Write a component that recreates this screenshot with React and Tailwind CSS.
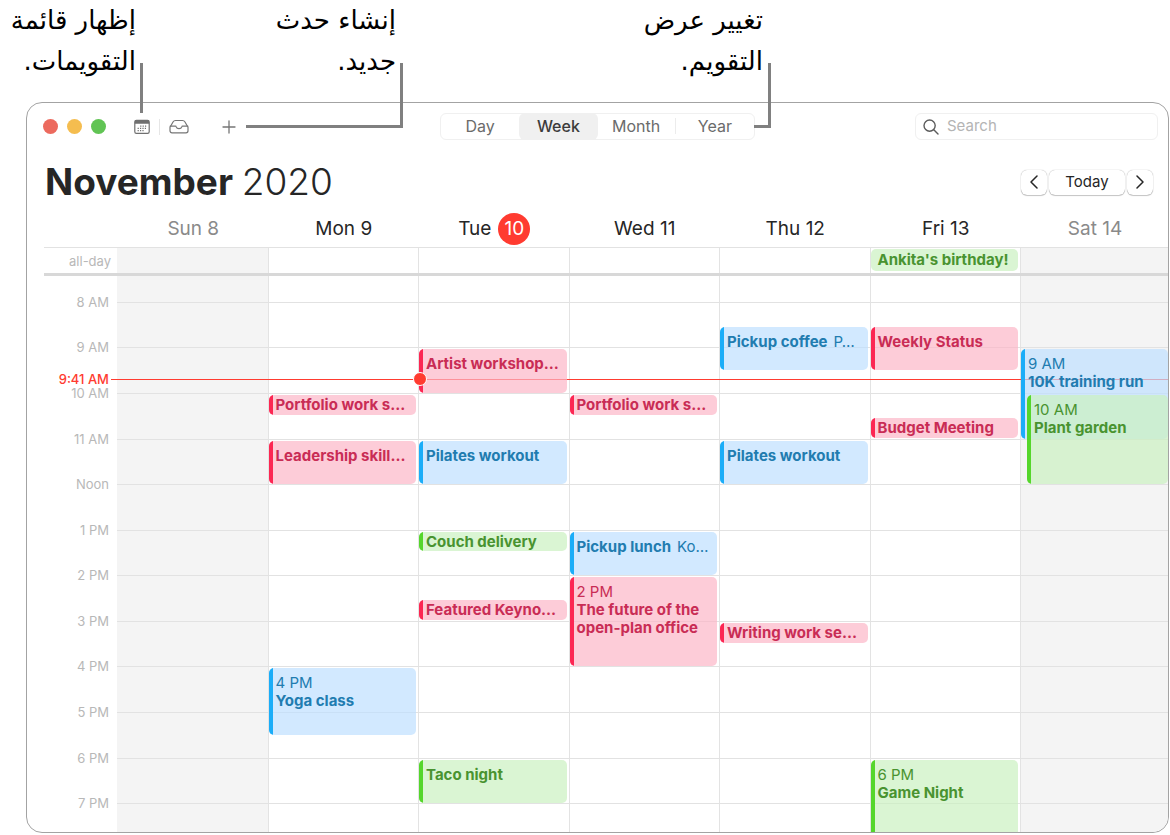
import React, { useState } from 'react';

// The visible part of the day, in minutes after midnight (7:26 AM - 7:38 PM)
const DAY_START = 446;
const DAY_END = 1178;
const NOW = 581;

const views = ['Day', 'Week', 'Month', 'Year'];

const days = [
  { name: 'Sun', date: 8, weekend: true },
  { name: 'Mon', date: 9 },
  { name: 'Tue', date: 10, today: true },
  { name: 'Wed', date: 11 },
  { name: 'Thu', date: 12 },
  { name: 'Fri', date: 13 },
  { name: 'Sat', date: 14, weekend: true },
];

const hours = [
  { hour: 8, label: '8 AM' },
  { hour: 9, label: '9 AM' },
  { hour: 10, label: '10 AM' },
  { hour: 11, label: '11 AM' },
  { hour: 12, label: 'Noon' },
  { hour: 13, label: '1 PM' },
  { hour: 14, label: '2 PM' },
  { hour: 15, label: '3 PM' },
  { hour: 16, label: '4 PM' },
  { hour: 17, label: '5 PM' },
  { hour: 18, label: '6 PM' },
  { hour: 19, label: '7 PM' },
];

const events = [
  { day: 1, start: 10, end: 10.5, title: 'Portfolio work s…', color: 'pink' },
  { day: 1, start: 11, end: 12, title: 'Leadership skill…', color: 'pink' },
  { day: 1, start: 16, end: 17.5, time: '4 PM', title: 'Yoga class', color: 'blue' },
  { day: 2, start: 9, end: 10, title: 'Artist workshop…', color: 'pink' },
  { day: 2, start: 11, end: 12, title: 'Pilates workout', color: 'blue' },
  { day: 2, start: 13, end: 13.5, title: 'Couch delivery', color: 'green' },
  { day: 2, start: 14.5, end: 15, title: 'Featured Keyno…', color: 'pink' },
  { day: 2, start: 18, end: 19, title: 'Taco night', color: 'green' },
  { day: 3, start: 10, end: 10.5, title: 'Portfolio work s…', color: 'pink' },
  { day: 3, start: 13, end: 14, title: 'Pickup lunch', place: 'Ko…', color: 'blue' },
  { day: 3, start: 14, end: 16, time: '2 PM', title: 'The future of the open-plan office', color: 'pink' },
  { day: 4, start: 8.5, end: 9.5, title: 'Pickup coffee', place: 'P…', color: 'blue' },
  { day: 4, start: 11, end: 12, title: 'Pilates workout', color: 'blue' },
  { day: 4, start: 15, end: 15.5, title: 'Writing work se…', color: 'pink' },
  { day: 5, start: 8.5, end: 9.5, title: 'Weekly Status', color: 'pink' },
  { day: 5, start: 10.5, end: 11, title: 'Budget Meeting', color: 'pink' },
  { day: 5, start: 18, end: 20, time: '6 PM', title: 'Game Night', color: 'green' },
  { day: 6, start: 9, end: 11, time: '9 AM', title: '10K training run', color: 'blue' },
  { day: 6, start: 10, end: 12, time: '10 AM', title: 'Plant garden', color: 'green', indent: true },
];

const colors = {
  pink: 'bg-[rgb(252_182_199/0.7)] text-[#c92c55]',
  blue: 'bg-[rgb(191_224_255/0.7)] text-[#217cb0]',
  green: 'bg-[rgb(202_241_192/0.7)] text-[#499330]',
};

const bars = {
  pink: 'bg-[#fc2753]',
  blue: 'bg-[#1badf8]',
  green: 'bg-[#55d62c]',
};

const columns = 'grid grid-cols-[73px_repeat(6,minmax(0,1fr))_148px]';

// Grid line for a minute of the day, kept inside the visible part
const row = (minute) => Math.min(Math.max(minute, DAY_START), DAY_END) - DAY_START + 1;

function CalendarIcon() {
  return (
    <svg width="16" height="16" viewBox="0 0 16 16" fill="none">
      <rect x="0.8" y="1.3" width="14.4" height="13" rx="1.6" stroke="#6f6f6f" strokeWidth="1.2" />
      <path d="M0.8 4.8V2.600a1.600 1.600 0 0 1 1.600-1.600h11.200a1.600 1.600 0 0 1 1.600 1.600v2.200z" fill="#6f6f6f" />
      <path d="M6.200 7.200h7M3.600 9.400h9.600M3.600 11.600h7" stroke="#6f6f6f" strokeWidth="1.200" strokeDasharray="1.200 1.200" />
    </svg>
  );
}

function InboxIcon() {
  return (
    <svg width="20" height="16" viewBox="0 0 20 16" fill="none" stroke="#767676" strokeWidth="1.2" strokeLinejoin="round" strokeLinecap="round">
      <path d="M1 8.200 4 3Q4.900 1.500 6.500 1.500h7Q15.100 1.500 16 3l3 5.200v3.600a2 2 0 0 1-2 2H3a2 2 0 0 1-2-2z" />
      <path d="M1.200 7.200h5.300q.6 0 .7.700a2.900 2.400 0 0 0 5.600 0q.1-.7.700-.7h5.300" />
    </svg>
  );
}

function Event({ event }) {
  const short = event.end - event.start < 1;
  const last = event.day === 6;
  const cut = event.end * 60 > DAY_END;
  return (
    <article
      className={`mt-[2px] flex overflow-hidden text-[15px] leading-[18px] ${cut ? 'rounded-t-[5px]' : 'rounded-[5px]'} ${last ? '' : 'mr-[2px]'} ${event.indent ? 'ml-[7px]' : 'ml-px'} ${short ? 'mb-px' : ''} ${colors[event.color]}`}
      style={{
        gridColumn: event.day + 2,
        gridRow: `${row(event.start * 60)} / ${row(event.end * 60)}`,
      }}
    >
      <div className={`w-1 shrink-0 ${bars[event.color]}`} />
      <div className={`min-w-0 flex-1 pl-[3px] ${short ? 'pt-px' : 'pt-[6px]'} ${event.time ? '' : 'whitespace-nowrap'}`}>
        {event.time && <p>{event.time}</p>}
        <h3 className="inline font-bold">{event.title}</h3>
        {event.place && <span className="ml-[6px]">{event.place}</span>}
      </div>
    </article>
  );
}

export default function App() {
  const [view, setView] = useState('Week');

  return (
    <div className="bg-white pl-[26px] pr-px pb-[2px] font-['Inter','Liberation_Sans',sans-serif] text-[#262626]">
      {/* Callouts */}
      <header
        className="grid grid-cols-[minmax(0,1fr)_315px_minmax(0,1fr)] whitespace-nowrap pb-5 font-['DejaVu_Sans',sans-serif] text-[26px] leading-[41px] text-black"
        lang="ar"
      >
        <div className="flex">
          <p className="w-[110px]" dir="rtl">إظهار قائمة<br />التقويمات.</p>
          <p className="w-[260px]" dir="rtl">إنشاء حدث<br />جديد.</p>
        </div>
        <p className="-mr-2" dir="rtl">تغيير عرض<br />التقويم.</p>
      </header>

      <main className="rounded-2xl border border-[#a3a3a3]">
        {/* Toolbar */}
        <div className="grid grid-cols-[minmax(0,1fr)_315px_minmax(0,1fr)] items-center pt-[10px]">
          <div className="flex items-center pl-4">
            <div className="flex gap-[9px]">
              <button aria-label="Close" className="size-[15px] rounded-full bg-[#ec6a5e]" />
              <button aria-label="Minimize" className="size-[15px] rounded-full bg-[#f5bd4f]" />
              <button aria-label="Zoom" className="size-[15px] rounded-full bg-[#61c454]" />
            </div>
            <button aria-label="Calendars" className="relative ml-7">
              <CalendarIcon />
              <span className="absolute bottom-[22px] left-[6px] h-[50px] w-[3px] bg-[#808080]" />
            </button>
            <div className="ml-[9px] h-4 w-px bg-[#e6e6e6]" />
            <button aria-label="Inbox" className="ml-[9px]">
              <InboxIcon />
            </button>
            <button aria-label="New event" className="relative ml-[33px]">
              <svg width="14" height="14" viewBox="0 0 14 14" stroke="#767676" strokeWidth="1.3" strokeLinecap="round">
                <path d="M7 1v12M1 7h12" />
              </svg>
              <span className="absolute bottom-[6px] left-6 h-[65px] w-[157px] border-b-3 border-r-3 border-[#808080]" />
            </button>
          </div>

          <div className="relative flex h-[27px] rounded-md border border-[#f0f0f0] text-[16px] text-[#6b6b6b]">
            {views.map((v) => (
              <button
                key={v}
                onClick={() => setView(v)}
                className={`my-[-1px] flex-1 pb-[2px] ${v === view ? 'rounded-md bg-[#f0f0f0] font-medium text-[#3c3c3c]' : ''}`}
              >
                <span className={`block leading-4 ${v === 'Month' ? 'border-r border-[#ececec]' : ''}`}>{v}</span>
              </button>
            ))}
            <span className="absolute bottom-[11px] left-full h-[65px] w-[17px] border-b-3 border-r-3 border-[#808080]" />
          </div>

          <label className="mr-[10px] flex h-[27px] w-[243px] items-center justify-self-end rounded-md border border-[#f0f0f0] pl-[7px]">
            <svg width="16" height="16" viewBox="0 0 16 16" fill="none" stroke="#5c5c5c" strokeWidth="1.4" strokeLinecap="round">
              <circle cx="6.6" cy="6.600" r="5.600" />
              <path d="M10.800 10.800 15 15" />
            </svg>
            <input
              type="text"
              aria-label="Search"
              placeholder="Search"
              className="ml-2 min-w-0 flex-1 text-[15px] outline-none placeholder:text-[#b4b4b4]"
            />
          </label>
        </div>

        {/* Month title */}
        <div className="flex items-center justify-between pb-[6px] pl-[18px] pr-[15px] pt-[17px]">
          <h1 className="text-[37px] font-bold leading-[50px]">
            November <span className="font-light">2020</span>
          </h1>
          <div className="flex gap-[2px] text-[15px]">
            <button aria-label="Previous week" className="flex h-[25px] w-[26px] items-center justify-center rounded-md shadow-[0_0_1px_#0006,0_1px_1px_#0003]">
              <svg width="8" height="14" viewBox="0 0 8 14" fill="none" stroke="#262626" strokeWidth="1.500" strokeLinecap="round" strokeLinejoin="round">
                <path d="M7 1 1 7l6 6" />
              </svg>
            </button>
            <button className="h-[25px] w-[76px] rounded-md shadow-[0_0_1px_#0006,0_1px_1px_#0003]">Today</button>
            <button aria-label="Next week" className="flex h-[25px] w-[26px] items-center justify-center rounded-md shadow-[0_0_1px_#0006,0_1px_1px_#0003]">
              <svg width="8" height="14" viewBox="0 0 8 14" fill="none" stroke="#262626" strokeWidth="1.500" strokeLinecap="round" strokeLinejoin="round">
                <path d="m1 1 6 6-6 6" />
              </svg>
            </button>
          </div>
        </div>

        <div className="pl-[17px]">
          {/* Day names */}
          <div className={`${columns} h-[28px] items-center text-[19px]`}>
            {days.map((d, i) => (
              <h2
                key={d.name}
                className={`flex items-center justify-center pl-[2px] ${i === 0 ? 'col-start-2' : ''} ${d.weekend ? 'text-[#8a8a8a]' : ''}`}
              >
                {d.today ? (
                  <>
                    {d.name}
                    <span className="ml-[7px] flex size-8 items-center justify-center rounded-full bg-[#ff3b30] text-white">{d.date}</span>
                  </>
                ) : (
                  `${d.name} ${d.date}`
                )}
              </h2>
            ))}
          </div>

          {/* All-day row */}
          <div className={`${columns} mt-[6px] h-[29px] border-t border-b-3 border-t-[#e2e2e2] border-b-[#d8d8d8]`}>
            <span className="self-center pr-[6px] text-right text-[13px] leading-4 text-[#b8b8b8]">all-day</span>
            {days.map((d) => (
              <div
                key={d.name}
                className={`border-[#e3e3e3] ${d.name === 'Sun' ? '' : 'border-l'} ${d.weekend ? 'bg-[#f4f4f4]' : ''}`}
              >
                {d.name === 'Fri' && (
                  <p className="mr-[2px] mt-px h-[22px] whitespace-nowrap rounded-[5px] bg-[#daf5d3] pl-[7px] text-[15px] font-bold leading-[21px] text-[#499330]">
                    Ankita's birthday!
                  </p>
                )}
              </div>
            ))}
          </div>

          {/* Hours, one grid row for each minute */}
          <div
            className={`${columns} h-[556px] overflow-hidden rounded-br-2xl`}
            style={{ gridTemplateRows: `repeat(${DAY_END - DAY_START}, minmax(0, 1fr))` }}
          >
            {days.map((d, i) => (
              <div
                key={d.name}
                className={`border-[#e3e3e3] ${i === 0 ? '' : 'border-l'} ${d.weekend ? 'bg-[#f4f4f4]' : ''}`}
                style={{ gridColumn: i + 2, gridRow: '1 / -1' }}
              />
            ))}
            {hours.map(({ hour, label }) => (
              <React.Fragment key={label}>
                <span
                  className="flex items-center justify-end pr-2 text-[13px] leading-4 text-[#b8b8b8]"
                  style={{ gridColumn: 1, gridRow: `${row(hour * 60 - 12)} / ${row(hour * 60 + 12)}` }}
                >
                  {label}
                </span>
                <div
                  className="border-t border-[#e2e2e2]"
                  style={{ gridColumn: '2 / -1', gridRow: `${row(hour * 60)} / span 2` }}
                />
              </React.Fragment>
            ))}
            <time
              className="flex items-center justify-end whitespace-nowrap pr-2 text-[13px] font-medium leading-[13px] text-[#ff3b30]"
              style={{ gridColumn: 1, gridRow: `${row(NOW - 10)} / ${row(NOW + 12)}` }}
            >
              9:41 AM
            </time>
            <div
              className="ml-[67px] h-px bg-[#ff3b30]"
              style={{ gridColumn: '1 / -1', gridRow: `${row(NOW)} / span 2` }}
            />
            {events.map((event) => (
              <Event key={`${event.day}-${event.start}`} event={event} />
            ))}
            <div
              className="z-10 -ml-[5px] size-[14px] self-center rounded-full border border-white bg-[#ff3b30]"
              style={{ gridColumn: 4, gridRow: `${row(NOW - 10)} / ${row(NOW + 11)}` }}
            />
          </div>
        </div>
      </main>
    </div>
  );
}
